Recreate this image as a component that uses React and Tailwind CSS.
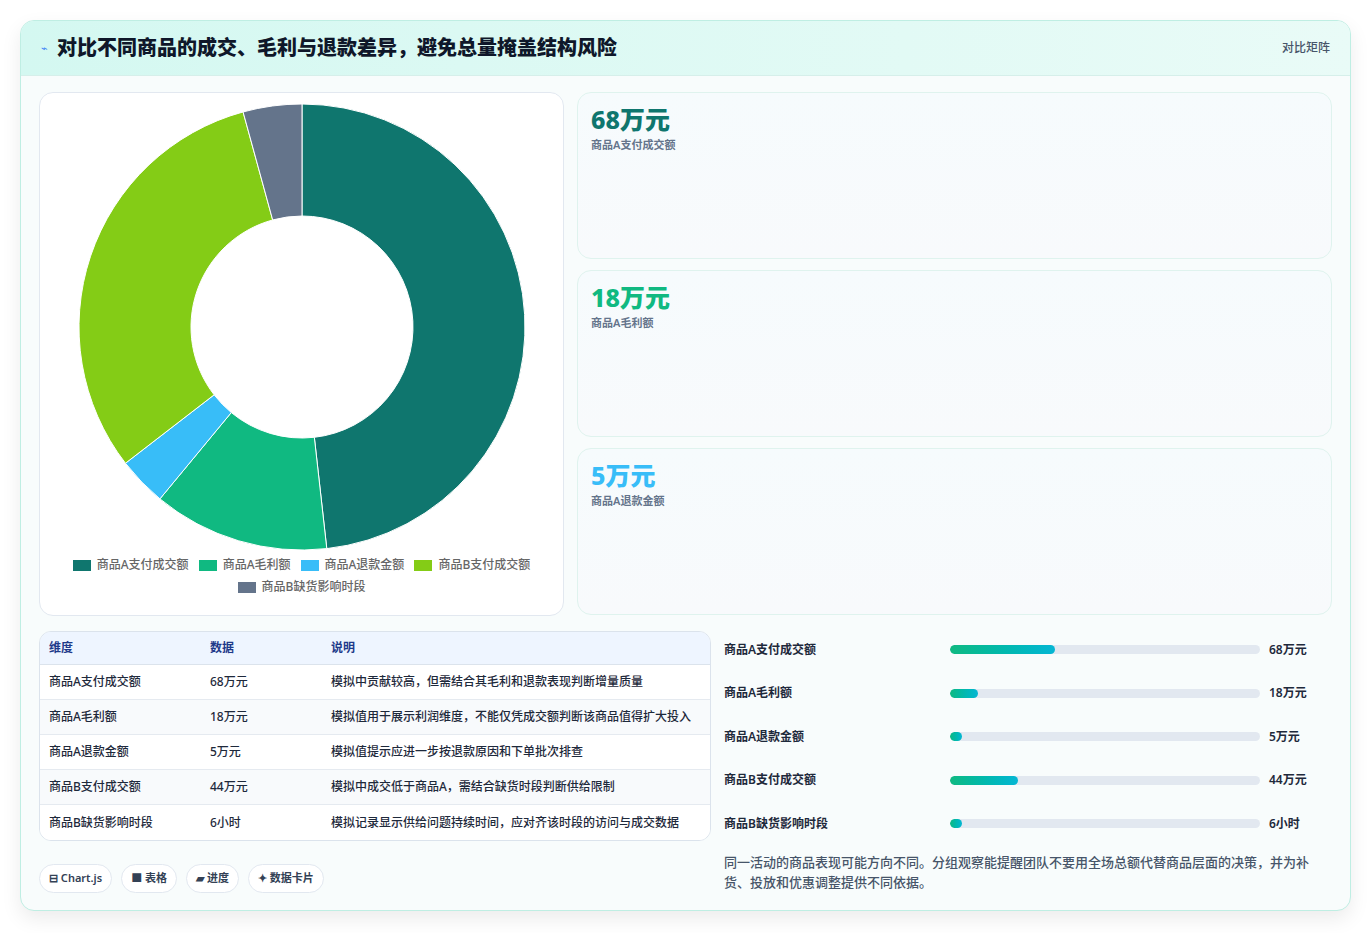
import React from "react";

const data = [
  { label: "商品A支付成交额", v: 68, text: "68万元", color: "#0f766e", desc: "模拟中贡献较高，但需结合其毛利和退款表现判断增量质量" },
  { label: "商品A毛利额", v: 18, text: "18万元", color: "#10b981", desc: "模拟值用于展示利润维度，不能仅凭成交额判断该商品值得扩大投入" },
  { label: "商品A退款金额", v: 5, text: "5万元", color: "#38bdf8", desc: "模拟值提示应进一步按退款原因和下单批次排查" },
  { label: "商品B支付成交额", v: 44, text: "44万元", color: "#84cc16", desc: "模拟中成交低于商品A，需结合缺货时段判断供给限制" },
  { label: "商品B缺货影响时段", v: 6, text: "6小时", color: "#64748b", desc: "模拟记录显示供给问题持续时间，应对齐该时段的访问与成交数据" },
];

function Donut() {
  const total = data.reduce((s, d) => s + d.v, 0);
  const cx = 223, cy = 223, R = 223, r = 111;
  let a = -Math.PI / 2;
  const paths = data.map((d, i) => {
    const sweep = (d.v / total) * Math.PI * 2;
    const a2 = a + sweep;
    const large = sweep > Math.PI ? 1 : 0;
    const p = (rad, ang) => `${cx + rad * Math.cos(ang)} ${cy + rad * Math.sin(ang)}`;
    const path = `M ${p(R, a)} A ${R} ${R} 0 ${large} 1 ${p(R, a2)} L ${p(r, a2)} A ${r} ${r} 0 ${large} 0 ${p(r, a)} Z`;
    a = a2;
    return <path key={i} d={path} fill={d.color} stroke="#fff" strokeWidth="1" />;
  });
  return <svg width="446" height="446" viewBox="0 0 446 446">{paths}</svg>;
}

const cards = [
  { v: "68万元", l: "商品A支付成交额", c: "text-[#0f766e]" },
  { v: "18万元", l: "商品A毛利额", c: "text-[#10b981]" },
  { v: "5万元", l: "商品A退款金额", c: "text-[#38bdf8]" },
];

export default function App() {
  return (
    <div className="min-h-[933px] bg-white p-[20px] pr-[20px]" style={{ fontFamily: '"Noto Sans", "Noto Sans CJK SC", sans-serif' }}>
      <div className="w-[1331px] h-[891px] rounded-[14px] border border-[#bfeee3] bg-[#f8fcfc] shadow-[0_8px_20px_rgba(0,0,0,0.08)] overflow-hidden">
        <div className="h-[55px] flex items-center justify-between px-[20px] bg-gradient-to-r from-[#d4f8f1] to-[#e9fbf7] border-b border-[#d6efea]">
          <div className="flex items-center gap-[9px]">
            <span className="text-[#3b82f6] text-[11px]">⌁</span>
            <span className="text-[20px] font-extrabold text-[#0f172a]">对比不同商品的成交、毛利与退款差异，避免总量掩盖结构风险</span>
          </div>
          <span className="text-[12px] font-medium text-[#475569]">对比矩阵</span>
        </div>
        <div className="px-[18px] pt-[16px]">
          <div className="flex gap-[13px]">
            <div className="w-[525px] h-[524px] bg-white rounded-[14px] border border-[#e2e8f0] flex flex-col items-center pt-[11px]">
              <Donut />
              <div className="mt-[6px] flex flex-wrap justify-center gap-x-[10px] gap-y-[4px] w-[480px] text-[12px] font-medium text-[#666]">
                {data.map((d) => (
                  <div key={d.label} className="flex items-center gap-[6px]">
                    <span className="w-[18px] h-[11px]" style={{ background: d.color }} />
                    {d.label}
                  </div>
                ))}
              </div>
            </div>
            <div className="flex-1 flex flex-col gap-[11px]">
              {cards.map((c) => (
                <div key={c.l} className="h-[167px] rounded-[14px] border border-[#dff3ee] bg-gradient-to-b from-[#f6fbfd] to-[#f8fafc] px-[13px] pt-[10px]">
                  <div className={`text-[25px] font-extrabold leading-[32px] ${c.c}`}>{c.v}</div>
                  <div className="text-[11px] font-semibold text-[#64748b] mt-[2px]">{c.l}</div>
                </div>
              ))}
            </div>
          </div>
          <div className="flex gap-[13px] mt-[15px]">
            <div className="w-[672px]">
              <div className="rounded-[12px] border border-[#dbe3ec] bg-white overflow-hidden text-[12px] font-medium">
                <div className="flex h-[33px] items-center bg-[#eef5ff] text-[#1e3a8a] font-semibold border-b border-[#dbe3ec]">
                  <div className="w-[170px] pl-[9px]">维度</div>
                  <div className="w-[121px]">数据</div>
                  <div className="flex-1">说明</div>
                </div>
                {data.map((d, i) => (
                  <div key={d.label} className={`flex h-[35px] items-center text-[#1e293b] ${i < 4 ? "border-b border-[#e5eaf0]" : ""} ${i % 2 ? "bg-[#f8fafc]" : "bg-white"}`}>
                    <div className="w-[170px] pl-[9px]">{d.label}</div>
                    <div className="w-[121px]">{d.text}</div>
                    <div className="flex-1">{d.desc}</div>
                  </div>
                ))}
              </div>
              <div className="flex gap-[9px] mt-[23px] text-[11px] text-[#334155]">
                {["⊟ Chart.js", "■ 表格", "▰ 进度", "✦ 数据卡片"].map((t) => (
                  <div key={t} className="h-[29px] px-[9px] flex items-center rounded-full border border-[#e2e8f0] bg-white font-semibold">{t}</div>
                ))}
              </div>
            </div>
            <div className="flex-1 pr-[22px] -mt-[3px]">
              {data.map((d) => (
                <div key={d.label} className="h-[43.5px] flex items-center text-[12px] font-semibold text-[#1e293b]">
                  <div className="w-[226px]">{d.label}</div>
                  <div className="flex-1 h-[9px] rounded-full bg-[#e2e8f0] overflow-hidden">
                    <div className="h-full rounded-full bg-gradient-to-r from-[#10b981] to-[#06b6d4] min-w-[12px]" style={{ width: `${(d.v / 200) * 100}%` }} />
                  </div>
                  <div className="w-[50px] pl-[9px]">{d.text}</div>
                </div>
              ))}
              <p className="mt-[6px] text-[13px] leading-[20px] font-medium text-[#475569]">同一活动的商品表现可能方向不同。分组观察能提醒团队不要用全场总额代替商品层面的决策，并为补货、投放和优惠调整提供不同依据。</p>
            </div>
          </div>
        </div>
      </div>
    </div>
  );
}
